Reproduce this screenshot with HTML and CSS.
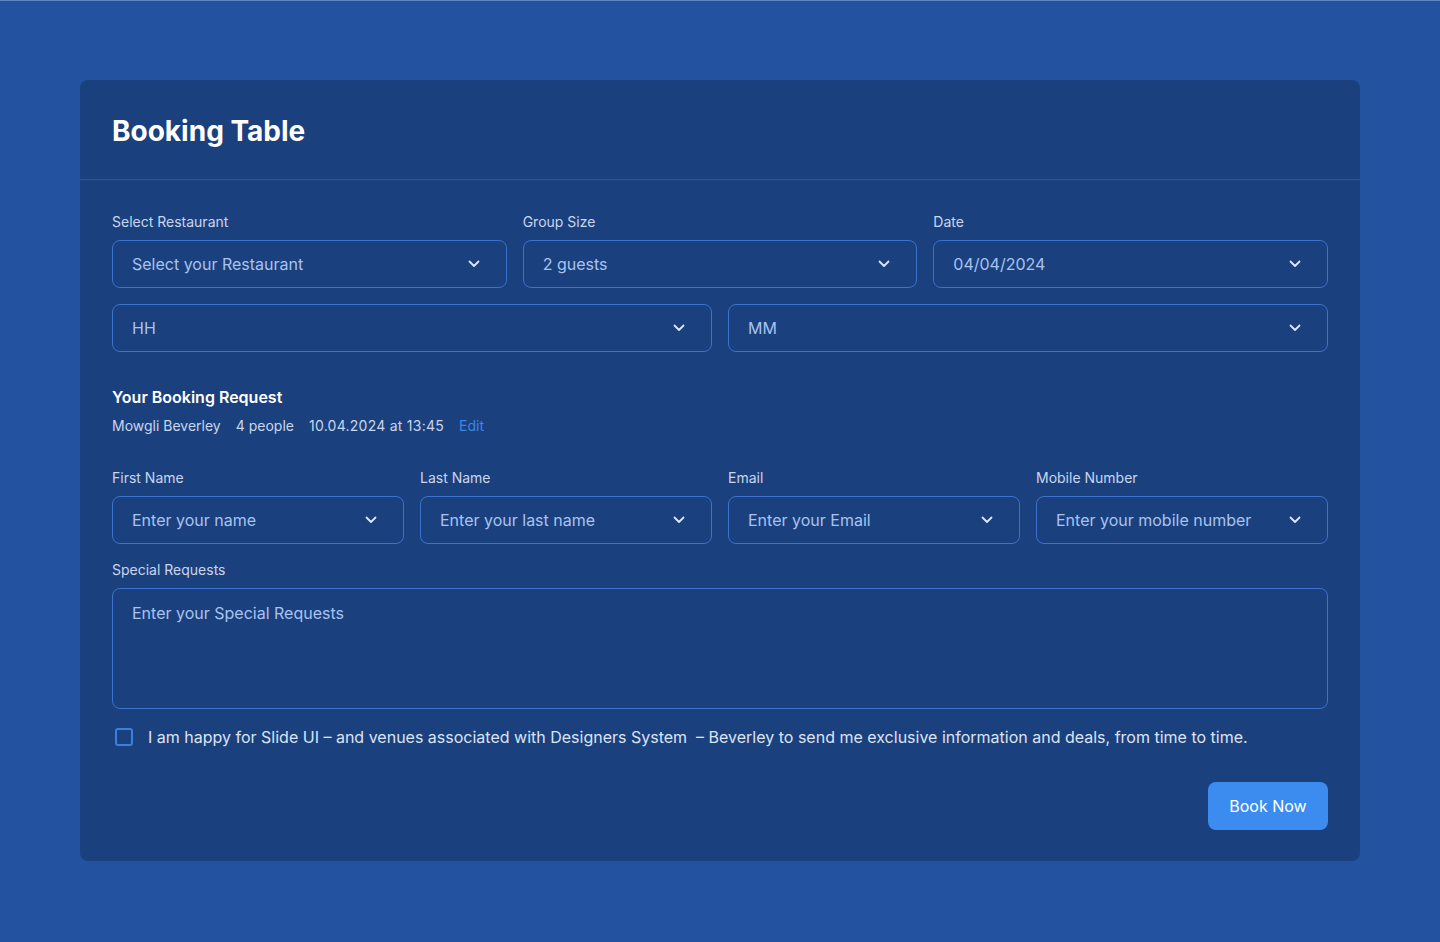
FILE: index.html
```html
<!DOCTYPE html>
<html lang="en">
<head>
<meta charset="utf-8">
<title>Booking Table</title>
<link rel="stylesheet" href="styles.css">
</head>
<body>
<div class="page">
  <div class="card">
    <div class="card-header">
      <h1 class="title">Booking Table</h1>
    </div>
    <div class="card-body">
      <div class="grid grid-3">
        <div class="field">
          <label class="label">Select Restaurant</label>
          <div class="select"><span>Select your Restaurant</span><svg class="chev" viewBox="0 0 12 8"><path d="M1.5 1.5 6 6l4.5-4.5"/></svg></div>
        </div>
        <div class="field">
          <label class="label">Group Size</label>
          <div class="select"><span>2 guests</span><svg class="chev" viewBox="0 0 12 8"><path d="M1.5 1.5 6 6l4.5-4.5"/></svg></div>
        </div>
        <div class="field">
          <label class="label">Date</label>
          <div class="select"><span>04/04/2024</span><svg class="chev" viewBox="0 0 12 8"><path d="M1.5 1.5 6 6l4.5-4.5"/></svg></div>
        </div>
      </div>
      <div class="grid grid-2 row-gap">
        <div class="select"><span>HH</span><svg class="chev" viewBox="0 0 12 8"><path d="M1.5 1.5 6 6l4.5-4.5"/></svg></div>
        <div class="select"><span>MM</span><svg class="chev" viewBox="0 0 12 8"><path d="M1.5 1.5 6 6l4.5-4.5"/></svg></div>
      </div>

      <div class="summary">
        <h2 class="summary-title">Your Booking Request</h2>
        <div class="summary-info">
          <span>Mowgli Beverley</span>
          <span>4 people</span>
          <span class="when">10.04.2024 at 13:45</span>
          <a class="edit" href="#">Edit</a>
        </div>
      </div>

      <div class="grid grid-4">
        <div class="field">
          <label class="label">First Name</label>
          <div class="select"><span>Enter your name</span><svg class="chev" viewBox="0 0 12 8"><path d="M1.5 1.5 6 6l4.5-4.5"/></svg></div>
        </div>
        <div class="field">
          <label class="label">Last Name</label>
          <div class="select"><span>Enter your last name</span><svg class="chev" viewBox="0 0 12 8"><path d="M1.5 1.5 6 6l4.5-4.5"/></svg></div>
        </div>
        <div class="field">
          <label class="label">Email</label>
          <div class="select"><span>Enter your Email</span><svg class="chev" viewBox="0 0 12 8"><path d="M1.5 1.5 6 6l4.5-4.5"/></svg></div>
        </div>
        <div class="field">
          <label class="label">Mobile Number</label>
          <div class="select"><span>Enter your mobile number</span><svg class="chev" viewBox="0 0 12 8"><path d="M1.5 1.5 6 6l4.5-4.5"/></svg></div>
        </div>
      </div>

      <div class="field special">
        <label class="label">Special Requests</label>
        <div class="textarea">Enter your Special Requests</div>
      </div>

      <div class="consent">
        <span class="checkbox"></span>
        <span class="consent-text">I am happy for Slide UI – and venues associated with Designers System &nbsp;– Beverley to send me exclusive information and deals, from time to time.</span>
      </div>

      <div class="actions">
        <button class="btn">Book Now</button>
      </div>
    </div>
  </div>
</div>
</body>
</html>
```

FILE: styles.css
```css
* { box-sizing: border-box; }
html, body { margin: 0; padding: 0; }
body {
  background: #2353a0;
  font-family: Inter, "Noto Sans", "Liberation Sans", sans-serif;
  color: #ffffff;
  border-top: 1px solid #5d86c6;
  min-height: 942px;
}
.page {
  padding: 79px 80px 80px;
}
.card {
  background: #1b407e;
  border-radius: 8px;
}
.card-header {
  padding: 33px 32px 30px;
  border-bottom: 1px solid #2a57a3;
}
.title {
  margin: 0;
  font-size: 28px;
  line-height: 36px;
  font-weight: 700;
  color: #ffffff;
}
.card-body {
  padding: 32px 32px 31px;
}
.grid { display: grid; gap: 16px; }
.grid-3 { grid-template-columns: repeat(3, 1fr); }
.grid-2 { grid-template-columns: repeat(2, 1fr); }
.grid-4 { grid-template-columns: repeat(4, 1fr); }
.row-gap { margin-top: 16px; }
.field { display: flex; flex-direction: column; }
.label {
  font-size: 14px;
  line-height: 20px;
  color: #c9d6ee;
  margin-bottom: 8px;
}
.select {
  height: 48px;
  border: 1px solid #3c71cd;
  border-radius: 8px;
  display: flex;
  align-items: center;
  justify-content: space-between;
  padding: 0 26px 0 19px;
  font-size: 16px;
  color: #a8c3ef;
}
.chev {
  width: 12px;
  height: 8px;
  fill: none;
  stroke: #dbe6fa;
  stroke-width: 1.8;
  stroke-linecap: round;
  stroke-linejoin: round;
}
.summary { margin-top: 33px; }
.summary-title {
  margin: 0;
  font-size: 16px;
  line-height: 24px;
  font-weight: 600;
  color: #ffffff;
}
.summary-info {
  margin-top: 7px;
  display: flex;
  gap: 15px;
  font-size: 14px;
  line-height: 20px;
  color: #c9d6ee;
}
.when { letter-spacing: 0.25px; }
.edit {
  color: #3d86e6;
  text-decoration: none;
}
.grid-4 { margin-top: 32px; }
.special { margin-top: 16px; }
.textarea {
  height: 121px;
  border: 1px solid #3c71cd;
  border-radius: 8px;
  padding: 13px 19px;
  font-size: 16px;
  line-height: 22px;
  color: #a8c3ef;
}
.consent {
  margin-top: 16px;
  display: flex;
  align-items: center;
  gap: 15px;
  padding-left: 3px;
  height: 24px;
}
.checkbox {
  width: 18px;
  height: 18px;
  border: 2px solid #3b7fdd;
  border-radius: 3px;
  flex: none;
}
.consent-text {
  font-size: 16px;
  line-height: 24px;
  color: #dbe4f4;
}
.actions {
  margin-top: 33px;
  display: flex;
  justify-content: flex-end;
}
.btn {
  width: 120px;
  height: 48px;
  border: none;
  border-radius: 8px;
  background: #3b8cee;
  color: #ffffff;
  font-family: inherit;
  font-size: 16px;
}
```
